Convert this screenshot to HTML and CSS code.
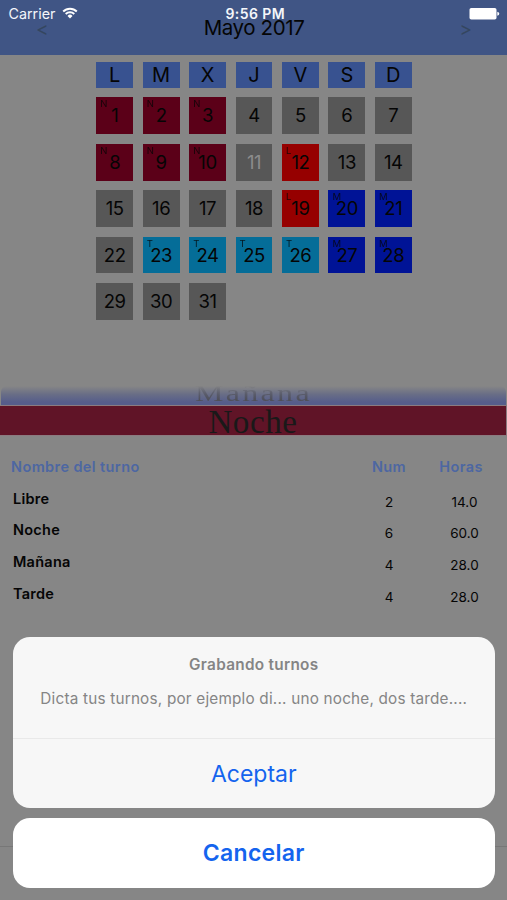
FILE: index.html
```html
<!doctype html>
<html lang="es">

<head>
  <meta charset="UTF-8" />
  <meta name="viewport" content="width=device-width, initial-scale=1.0" />
  <title>Mayo 2017</title>
  <link rel="stylesheet" href="styles.css">
</head>

<body>
  <div class="screen">
    <div class="status-bar">
      <div class="carrier">
        <span>Carrier</span>
        <svg class="wifi" viewBox="0 0 16 12" width="16" height="12">
          <path d="M1.2 4.5A9.6 9.6 0 0 1 14.8 4.5M3.7 7A6.1 6.1 0 0 1 12.3 7" fill="none" stroke="#fff" stroke-width="1.9" />
          <path d="M5.5 8.9A3.5 3.5 0 0 1 10.5 8.9L8 11.5Z" fill="#fff" />
        </svg>
      </div>
      <span class="clock">9:56 PM</span>
      <svg class="battery" viewBox="0 0 31 12" width="31" height="12">
        <rect x="0.5" y="0" width="27" height="11.5" rx="1.8" fill="#fff" />
        <path d="M28.3 3.8Q30.3 4.2 30.3 5.8T28.3 7.8Z" fill="#fff" />
      </svg>
    </div>

    <header class="header">
      <span class="arrow">&lt;</span>
      <h1 class="month">Mayo 2017</h1>
      <span class="arrow">&gt;</span>
    </header>

    <main class="content">
      <div class="weekdays">
        <span>L</span><span>M</span><span>X</span><span>J</span><span>V</span><span>S</span><span>D</span>
      </div>

      <div class="days">
        <div class="day noche"><small>N</small>1</div>
        <div class="day noche"><small>N</small>2</div>
        <div class="day noche"><small>N</small>3</div>
        <div class="day">4</div>
        <div class="day">5</div>
        <div class="day">6</div>
        <div class="day">7</div>
        <div class="day noche"><small>N</small>8</div>
        <div class="day noche"><small>N</small>9</div>
        <div class="day noche"><small>N</small>10</div>
        <div class="day today">11</div>
        <div class="day libre"><small>L</small>12</div>
        <div class="day">13</div>
        <div class="day">14</div>
        <div class="day">15</div>
        <div class="day">16</div>
        <div class="day">17</div>
        <div class="day">18</div>
        <div class="day libre"><small>L</small>19</div>
        <div class="day manana"><small>M</small>20</div>
        <div class="day manana"><small>M</small>21</div>
        <div class="day">22</div>
        <div class="day tarde"><small>T</small>23</div>
        <div class="day tarde"><small>T</small>24</div>
        <div class="day tarde"><small>T</small>25</div>
        <div class="day tarde"><small>T</small>26</div>
        <div class="day manana"><small>M</small>27</div>
        <div class="day manana"><small>M</small>28</div>
        <div class="day">29</div>
        <div class="day">30</div>
        <div class="day">31</div>
      </div>

      <div class="picker">
        <div class="picker-prev"><span>Mañana</span></div>
        <div class="picker-current">Noche</div>
      </div>

      <div class="summary">
        <div class="summary-row summary-head">
          <span>Nombre del turno</span><span class="num">Num</span><span class="hours">Horas</span>
        </div>
        <div class="summary-row">
          <span class="name">Libre</span><span class="num">2</span><span class="hours">14.0</span>
        </div>
        <div class="summary-row">
          <span class="name">Noche</span><span class="num">6</span><span class="hours">60.0</span>
        </div>
        <div class="summary-row">
          <span class="name">Mañana</span><span class="num">4</span><span class="hours">28.0</span>
        </div>
        <div class="summary-row">
          <span class="name">Tarde</span><span class="num">4</span><span class="hours">28.0</span>
        </div>
      </div>
    </main>

    <footer class="toolbar"></footer>

    <div class="action-sheet">
      <div class="sheet-card">
        <div class="sheet-text">
          <h2 class="sheet-title">Grabando turnos</h2>
          <p class="sheet-message">Dicta tus turnos, por ejemplo di... uno noche, dos tarde....</p>
        </div>
        <button type="button" class="sheet-button">Aceptar</button>
      </div>
      <button type="button" class="sheet-button cancel">Cancelar</button>
    </div>
  </div>
</body>

</html>
```
FILE: styles.css
```css
* {
  margin: 0;
  padding: 0;
  box-sizing: border-box;
}

body {
  font-family: Inter, sans-serif;
  background-color: #868686;
  color: #050505;
}

.screen {
  position: relative;
  display: flex;
  flex-direction: column;
  width: 507px;
  height: 900px;
  overflow: hidden;
}

/* status bar sits over the header */
.status-bar {
  position: absolute;
  top: 0;
  left: 0;
  right: 0;
  height: 27px;
  padding: 0 7px 0 8.5px;
  display: grid;
  grid-template-columns: 1fr auto 1fr;
  align-items: center;
  color: #f4f6fa;
  font-size: 14.3px;
  z-index: 1;
}

.carrier {
  display: flex;
  align-items: center;
  gap: 7px;
}

.wifi {
  margin-top: -2px;
}

.clock {
  padding-left: 2px;
  font-size: 14px;
  font-weight: 600;
  letter-spacing: 0.4px;
}

.battery {
  justify-self: end;
}

.header {
  display: flex;
  justify-content: space-between;
  height: 54.5px;
  flex-shrink: 0;
  padding: 14px 35px 0 36px;
  background-color: #405585;
}

.month {
  font-size: 20.5px;
  font-weight: 400;
  line-height: 27px;
  letter-spacing: -0.4px;
}

.arrow {
  font-size: 19px;
  line-height: 31px;
  color: #34465f;
}

.content {
  flex: 1;
  padding-top: 7.5px;
}

.weekdays,
.days {
  display: grid;
  grid-template-columns: repeat(7, 36.8px);
  column-gap: 9.65px;
  padding-left: 96.3px;
}

.weekdays span {
  height: 25.7px;
  line-height: 27px;
  text-align: center;
  font-size: 20px;
  background-color: #385290;
}

.days {
  margin-top: 9.6px;
  grid-auto-rows: 36.8px;
  row-gap: 9.65px;
}

.day {
  position: relative;
  line-height: 37px;
  text-align: center;
  font-size: 18.5px;
  letter-spacing: -0.4px;
  background-color: #575757;
}

.day small {
  position: absolute;
  top: 2px;
  left: 4px;
  font-size: 9.5px;
  line-height: 10px;
  opacity: 0.8;
}

.noche {
  background-color: #5b0018;
}

.libre {
  background-color: #960000;
}

.manana {
  background-color: #001396;
}

.tarde {
  background-color: #056d98;
}

.today {
  color: #8c8c8c;
}

.picker {
  margin-top: 66px;
  height: 50px;
  font-family: "Liberation Serif", serif;
  text-align: center;
  color: #191919;
}

.picker-prev {
  height: 19px;
  margin: 0 1px;
  background: linear-gradient(#868686, #686d86 45%, #565d8b 85%);
  border-radius: 6px 6px 0 0;
}

.picker-prev span {
  display: block;
  height: 32px;
  font-size: 32px;
  line-height: 32px;
  letter-spacing: 2.3px;
  transform: translateY(-5px) scaleY(0.75);
  transform-origin: top;
  color: transparent;
  background: linear-gradient(rgba(80, 80, 88, 0) 20%, #505058 80%);
  background-clip: text;
  -webkit-background-clip: text;
}

.picker-current {
  height: 31px;
  line-height: 32px;
  font-size: 33px;
  letter-spacing: 0.6px;
  background-color: #601427;
  border: 1px solid #8b7b80;
  border-left: 0;
}

.summary {
  padding: 15px 0 0 11px;
}

.summary-row {
  display: grid;
  grid-template-columns: 342px 72px 72px;
  height: 31.8px;
  font-size: 14.5px;
  line-height: 31px;
}

.summary-head {
  font-weight: 600;
  letter-spacing: 0.4px;
  color: #4d67a2;
}

.name {
  padding-left: 2px;
  font-weight: 600;
  letter-spacing: 0.25px;
}

.num,
.hours {
  text-align: center;
}

.summary-row:not(.summary-head) .num,
.summary-row:not(.summary-head) .hours {
  padding-top: 4px;
  font-size: 13.5px;
}

.summary-row:not(.summary-head) .hours {
  padding-left: 7px;
}

.toolbar {
  height: 54px;
  border-top: 1px solid #777;
}

/* action sheet over the whole screen */
.action-sheet {
  position: absolute;
  left: 13px;
  right: 12.5px;
  bottom: 12px;
  display: flex;
  flex-direction: column;
  gap: 10px;
}

.sheet-card {
  border-radius: 17px;
  background-color: #f7f7f7;
  overflow: hidden;
}

.sheet-text {
  height: 101px;
  padding-top: 17.5px;
  text-align: center;
  color: #858585;
}

.sheet-title {
  font-size: 15.3px;
  font-weight: 600;
  line-height: 20px;
  letter-spacing: 0.3px;
}

.sheet-message {
  margin-top: 14px;
  font-size: 15.3px;
  line-height: 20px;
  letter-spacing: 0.2px;
  white-space: nowrap;
}

.sheet-button {
  display: block;
  width: 100%;
  height: 70px;
  border: none;
  border-top: 1px solid #e9e9e9;
  background-color: transparent;
  font-family: inherit;
  font-size: 23px;
  color: #1464ee;
  cursor: pointer;
}

.cancel {
  border-top: none;
  border-radius: 17px;
  background-color: #fff;
  font-weight: 600;
  letter-spacing: 0.3px;
}
```
